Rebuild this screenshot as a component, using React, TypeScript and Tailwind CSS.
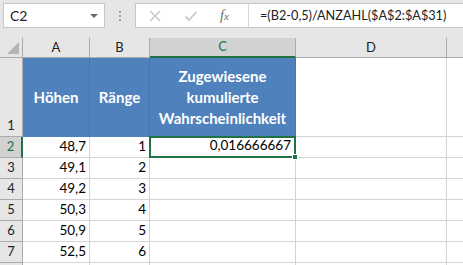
import React from 'react';

const cols = [
  { key: 'A', w: 'w-[67px]' },
  { key: 'B', w: 'w-[60px]' },
  { key: 'C', w: 'w-[146px]' },
  { key: 'D', w: 'w-[151px]' },
];

const data = [
  { row: 2, a: '48,7', b: '1', c: '0,016666667' },
  { row: 3, a: '49,1', b: '2', c: '' },
  { row: 4, a: '49,2', b: '3', c: '' },
  { row: 5, a: '50,3', b: '4', c: '' },
  { row: 6, a: '50,9', b: '5', c: '' },
  { row: 7, a: '52,5', b: '6', c: '' },
  { row: 8, a: '', b: '', c: '' },
];

const FormulaBar = () => (
  <div className="flex h-[38px] items-start bg-[#e6e6e6] pt-[3px]">
    <div className="ml-[3px] flex h-[25px] w-[102px] items-center justify-between border border-[#c6c6c6] bg-white pl-[6px] pr-[6px] text-[14px] text-[#222]">
      <span>C2</span>
      <span className="h-0 w-0 border-l-[4px] border-r-[4px] border-t-[4px] border-l-transparent border-r-transparent border-t-[#6d6d6d]" />
    </div>
    <div className="flex h-[25px] w-[30px] flex-col items-center justify-center gap-[2px]">
      <span className="h-[2px] w-[2px] bg-[#a0a0a0]" />
      <span className="h-[2px] w-[2px] bg-[#a0a0a0]" />
      <span className="h-[2px] w-[2px] bg-[#a0a0a0]" />
    </div>
    <div className="flex h-[25px] min-w-0 flex-1 border border-r-0 border-[#c6c6c6] bg-white">
      <div className="flex w-[112px] shrink-0 items-center">
        <svg width="14" height="14" viewBox="0 0 14 14" className="ml-[12px]">
          <path d="M2 2 L12 12 M12 2 L2 12" stroke="#c8c8c8" strokeWidth="1.6" fill="none" />
        </svg>
        <svg width="14" height="14" viewBox="0 0 14 14" className="ml-[22px]">
          <path d="M1.5 7.5 L5 11 L12.5 3" stroke="#c8c8c8" strokeWidth="1.8" fill="none" />
        </svg>
        <span
          className="ml-[22px] text-[14px] italic text-[#6a6a6a]"
          style={{ fontFamily: '"Liberation Serif", serif' }}
        >
          f<span className="text-[11px]">x</span>
        </span>
      </div>
      <div className="flex min-w-0 flex-1 items-center overflow-hidden whitespace-nowrap border-l border-[#d8d8d8] pl-[11px] text-[12.7px] text-[#222]">
        =(B2-0,5)/ANZAHL($A$2:$A$31)
      </div>
    </div>
  </div>
);

export default function App() {
  return (
    <div
      className="h-[265px] w-[463px] overflow-hidden bg-white"
      style={{ fontFamily: 'Lato, "Liberation Sans", sans-serif' }}
    >
      <FormulaBar />

      {/* column headers */}
      <div className="flex h-[20px] bg-[#e6e6e6] text-[13px] text-[#222]">
        <div className="relative w-[23px] border-b border-r border-[#ababab]">
          <span className="absolute bottom-[3px] right-[3px] h-0 w-0 border-b-[12px] border-l-[12px] border-b-[#b4b4b4] border-l-transparent" />
        </div>
        {cols.map((c) =>
          c.key === 'C' ? (
            <div
              key={c.key}
              className={`${c.w} flex items-center justify-center border-b-2 border-r border-b-[#217346] border-r-[#ababab] bg-[#d2d2d2] text-[#217346]`}
            >
              {c.key}
            </div>
          ) : (
            <div
              key={c.key}
              className={`${c.w} flex items-center justify-center border-b border-r border-[#ababab]`}
            >
              {c.key}
            </div>
          )
        )}
        <div className="flex-1 border-b border-[#ababab]" />
      </div>

      {/* row 1 */}
      <div className="flex h-[79px] text-[15px]">
        <div className="flex w-[23px] items-end justify-center border-b border-r border-[#ababab] bg-[#e6e6e6] pb-[1px] text-[13px] text-[#222]">
          1
        </div>
        <div className="flex w-[67px] items-center justify-center border-r border-[#2f8a8f] bg-[#4f81bd] font-bold text-white">
          Höhen
        </div>
        <div className="flex w-[60px] items-center justify-center border-r border-[#2f8a8f] bg-[#4f81bd] font-bold text-white">
          Ränge
        </div>
        <div className="flex w-[146px] items-center justify-center border-r border-[#2f8a8f] bg-[#4f81bd] text-center font-bold leading-[21px] text-white">
          Zugewiesene
          <br />
          kumulierte
          <br />
          Wahrscheinlichkeit
        </div>
        <div className="w-[151px] border-b border-r border-[#d4d4d4]" />
        <div className="flex-1 border-b border-[#d4d4d4]" />
      </div>

      {/* data rows */}
      {data.map((r) => (
        <div key={r.row} className="flex h-[21px] text-[13.5px] text-black">
          <div
            className={
              r.row === 2
                ? 'flex w-[23px] items-end justify-center border-b border-r-2 border-b-[#ababab] border-r-[#217346] bg-[#d2d2d2] pb-[1px] text-[13px] text-[#217346]'
                : 'flex w-[23px] items-end justify-center border-b border-r border-[#ababab] bg-[#e6e6e6] pb-[1px] text-[13px] text-[#222]'
            }
          >
            {r.row < 8 ? r.row : ''}
          </div>
          <div className="flex w-[67px] items-end justify-end border-b border-r border-[#d4d4d4] pb-[1px] pr-[3px]">
            {r.a}
          </div>
          <div className="flex w-[60px] items-end justify-end border-b border-r border-[#d4d4d4] pb-[1px] pr-[3px]">
            {r.b}
          </div>
          {r.row === 2 ? (
            <div className="relative -ml-[1px] -mt-[1px] flex h-[22px] w-[147px] items-end justify-end border-2 border-[#217346] pb-[1px] pr-[3px]">
              {r.c}
              <span className="absolute -bottom-[4px] -right-[4px] h-[6px] w-[6px] border border-white bg-[#217346]" />
            </div>
          ) : (
            <div className="w-[146px] border-b border-r border-[#d4d4d4]" />
          )}
          <div className="w-[151px] border-b border-r border-[#d4d4d4]" />
          <div className="flex-1 border-b border-[#d4d4d4]" />
        </div>
      ))}
    </div>
  );
}
